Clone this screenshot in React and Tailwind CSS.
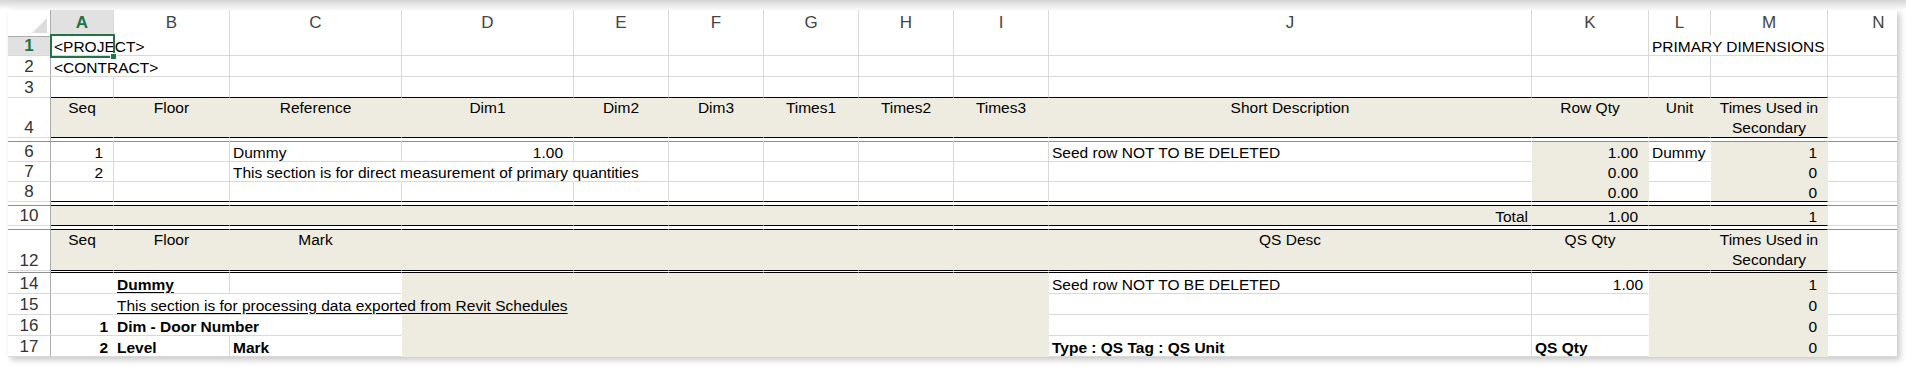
import React from "react";

const cols =
  "grid grid-cols-[43px_63px_116px_172px_172px_95px_95px_95px_95px_95px_483px_117px_62px_117px_102px]";

const letters = ["A", "B", "C", "D", "E", "F", "G", "H", "I", "J", "K", "L", "M", "N"];

function Cell({ t, fill, r, b, al = "l", bold, u, over, top, wrap }) {
  const rr = r ?? !fill;
  const bb = b ?? (fill ? "none" : "grid");
  const bcls =
    bb === "black"
      ? "border-b-black"
      : bb === "none"
      ? "border-b-transparent"
      : bb === "dark"
      ? "border-b-[#8f8f8f]"
      : "border-b-[#d9d9d9]";
  const rcls = rr ? "border-r-[#d9d9d9]" : "border-r-transparent";
  const jcls =
    al === "r"
      ? "justify-end pr-[3px]"
      : al === "n"
      ? "justify-end pr-[10px]"
      : al === "k"
      ? "justify-end pr-[5px]"
      : al === "c"
      ? "justify-center text-center"
      : "justify-start pl-[3px]";
  return (
    <div
      className={`flex border-r border-b ${rcls} ${bcls} ${jcls} ${
        fill ? "bg-[#eeece1]" : "bg-white"
      } ${top ? "items-start leading-[20px]" : "items-end leading-[17px]"} ${
        over ? "overflow-visible" : "overflow-hidden"
      } text-[15.5px] text-black`}
    >
      {t && (
        <span
          className={`${wrap ? "whitespace-normal px-[2px]" : "whitespace-nowrap"} ${
            bold ? "font-bold" : ""
          } ${u ? "underline underline-offset-[2px]" : ""} ${over ? "relative z-10" : ""}`}
        >
          {t}
        </span>
      )}
    </div>
  );
}

function RowHdr({ n, sel, b = "grid" }) {
  return (
    <div
      className={`flex items-end justify-center border-r border-b border-r-[#ababab] ${
        b === "dark" ? "border-b-[#8f8f8f]" : "border-b-[#d9d9d9]"
      } ${sel ? "bg-[#e1e1e1] text-[#217346] font-bold" : "bg-white text-[#333]"} text-[17px] leading-[18px]`}
    >
      {n}
    </div>
  );
}

function Row({ h, n, sel, hb, cells, top }) {
  return (
    <div className={`${cols} ${h}`}>
      <RowHdr n={n} sel={sel} b={hb} />
      {cells.map((c, i) => (
        <Cell key={i} top={top} {...c} />
      ))}
    </div>
  );
}

const blank = (k) => Array.from({ length: k }, () => ({}));
const beige = (k, extra = {}) => Array.from({ length: k }, () => ({ fill: true, ...extra }));
const sep = (b) => [
  ...Array.from({ length: 13 }, () => ({ r: false, b })),
  { b: "dark" },
];

export default function App() {
  return (
    <div className="w-[1906px] h-[367px] bg-white overflow-hidden font-['Liberation_Sans',Arial,sans-serif]">
      <div className="h-[10px] bg-linear-to-b from-[#d4d4d4] to-white" />
      <div className="pl-[8px]">
        <div className="relative w-[1889px] overflow-hidden bg-white shadow-[3px_3px_6px_rgba(0,0,0,0.22)]">
          {/* column letters */}
          <div className={`${cols} h-[25px]`}>
            <div className="relative border-r border-b border-[#ababab] bg-white">
              <svg className="absolute right-[3px] bottom-[3px]" width="15" height="15" viewBox="0 0 15 15">
                <polygon points="15,0 15,15 0,15" fill="#dcdcdc" />
              </svg>
            </div>
            {letters.map((l) => (
              <div
                key={l}
                className={`flex items-center justify-center border-r border-b border-r-[#dadada] border-b-[#ababab] text-[17px] ${
                  l === "A" ? "bg-[#e1e1e1] text-[#217346] font-bold" : "bg-white text-[#444]"
                }`}
              >
                {l}
              </div>
            ))}
          </div>

          <Row
            h="h-[21px]"
            n="1"
            sel
            cells={[
              { t: "<PROJECT>", over: true, r: false },
              ...blank(10),
              { t: "PRIMARY DIMENSIONS", over: true, r: false },
              {},
              {},
            ]}
          />
          <Row h="h-[21px]" n="2" cells={[{ t: "<CONTRACT>", over: true, r: false }, ...blank(13)]} />
          <Row h="h-[21px]" n="3" cells={[...Array.from({ length: 13 }, () => ({ b: "black" })), {}]} />
          <Row
            h="h-[40px]"
            n="4"
            top
            cells={[
              ...["Seq", "Floor", "Reference", "Dim1", "Dim2", "Dim3", "Times1", "Times2", "Times3", "Short Description", "Row Qty", "Unit"].map(
                (t) => ({ t, fill: true, b: "black", al: "c" })
              ),
              { t: "Times Used in Secondary", fill: true, b: "black", al: "c", wrap: true },
              {},
            ]}
          />
          <Row h="h-[4px]" n="" hb="dark" cells={sep("dark")} />
          <Row
            h="h-[20px]"
            n="6"
            cells={[
              { t: "1", al: "n" },
              {},
              { t: "Dummy" },
              { t: "1.00", al: "n" },
              ...blank(5),
              { t: "Seed row NOT TO BE DELETED", r: false },
              { t: "1.00", al: "n", fill: true },
              { t: "Dummy", r: false },
              { t: "1", al: "n", fill: true },
              {},
            ]}
          />
          <Row
            h="h-[20px]"
            n="7"
            cells={[
              { t: "2", al: "n" },
              {},
              { t: "This section is for direct measurement of primary quantities", over: true, r: false },
              { r: false },
              ...blank(5),
              { r: false },
              { t: "0.00", al: "n", fill: true },
              { r: false },
              { t: "0", al: "n", fill: true },
              {},
            ]}
          />
          <Row
            h="h-[20px]"
            n="8"
            cells={[
              ...Array.from({ length: 9 }, () => ({ b: "black" })),
              { r: false, b: "black" },
              { t: "0.00", al: "n", fill: true, b: "black" },
              { r: false, b: "black" },
              { t: "0", al: "n", fill: true, b: "black" },
              {},
            ]}
          />
          <Row h="h-[4px]" n="" hb="dark" cells={sep("black")} />
          <Row
            h="h-[20px]"
            n="10"
            cells={[
              ...beige(9, { b: "black" }),
              { t: "Total", al: "r", fill: true, b: "black" },
              { t: "1.00", al: "n", fill: true, b: "black" },
              { fill: true, b: "black" },
              { t: "1", al: "n", fill: true, b: "black" },
              {},
            ]}
          />
          <Row h="h-[4px]" n="" hb="dark" cells={sep("black")} />
          <Row
            h="h-[41px]"
            n="12"
            top
            cells={[
              { t: "Seq", fill: true, b: "black", al: "c" },
              { t: "Floor", fill: true, b: "black", al: "c" },
              { t: "Mark", fill: true, b: "black", al: "c" },
              ...beige(6, { b: "black" }),
              { t: "QS Desc", fill: true, b: "black", al: "c" },
              { t: "QS Qty", fill: true, b: "black", al: "c" },
              { fill: true, b: "black" },
              { t: "Times Used in Secondary", fill: true, b: "black", al: "c", wrap: true },
              {},
            ]}
          />
          <Row h="h-[2px]" n="" hb="dark" cells={sep("black")} />
          <Row
            h="h-[21px]"
            n="14"
            cells={[
              { r: false },
              { t: "Dummy", bold: true, u: true },
              { r: false },
              ...beige(6),
              { t: "Seed row NOT TO BE DELETED" },
              { t: "1.00", al: "k", r: false },
              { fill: true },
              { t: "1", al: "n", fill: true },
              {},
            ]}
          />
          <Row
            h="h-[21px]"
            n="15"
            cells={[
              { r: false },
              { t: "This section is for processing data exported from Revit Schedules", u: true, over: true, r: false },
              { r: false },
              ...beige(6),
              {},
              { r: false },
              { fill: true },
              { t: "0", al: "n", fill: true },
              {},
            ]}
          />
          <Row
            h="h-[21px]"
            n="16"
            cells={[
              { t: "1", bold: true, al: "k", r: false },
              { t: "Dim - Door Number", bold: true, over: true, r: false },
              { r: false },
              ...beige(6),
              {},
              { r: false },
              { fill: true },
              { t: "0", al: "n", fill: true },
              {},
            ]}
          />
          <Row
            h="h-[21px]"
            n="17"
            cells={[
              { t: "2", bold: true, al: "k", r: false },
              { t: "Level", bold: true },
              { t: "Mark", bold: true, r: false },
              ...beige(6),
              { t: "Type : QS Tag : QS Unit", bold: true },
              { t: "QS Qty", bold: true, r: false },
              { fill: true },
              { t: "0", al: "n", fill: true },
              {},
            ]}
          />

          {/* active cell A1 */}
          <div className="absolute left-[42px] top-[24px] z-20 w-[65px] h-[24px] border-2 border-[#217346]">
            <div className="absolute -right-[4px] -bottom-[4px] w-[7px] h-[7px] bg-[#217346] border border-white" />
          </div>
        </div>
      </div>
    </div>
  );
}
